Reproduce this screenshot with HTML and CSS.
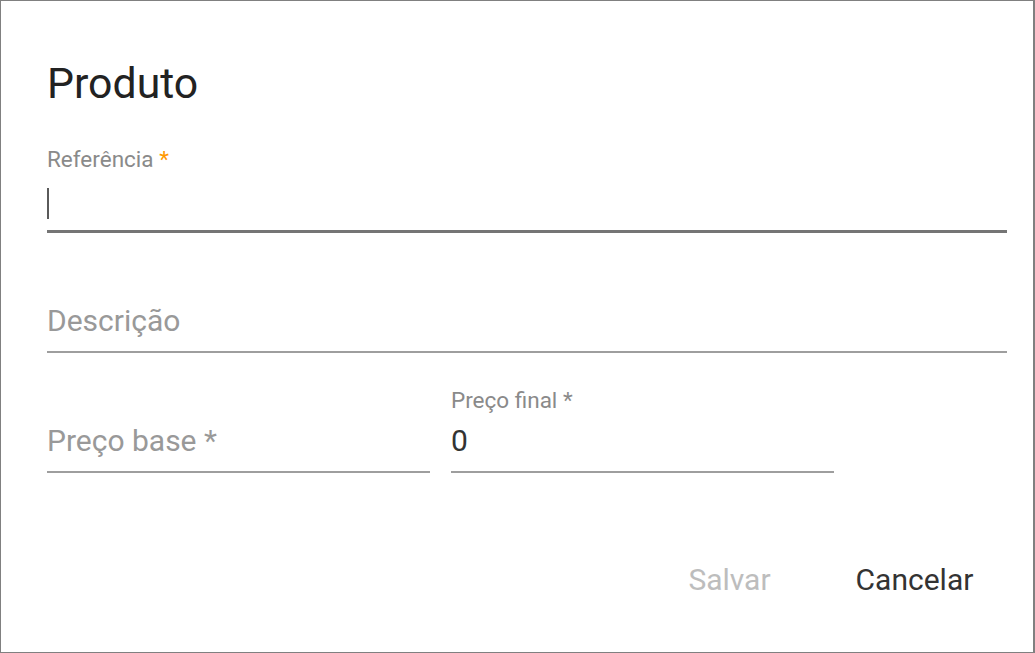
FILE: index.html
```html
<!DOCTYPE html>
<html lang="pt">
<head>
<meta charset="utf-8">
<title>Produto</title>
<link rel="stylesheet" href="styles.css">
</head>
<body>
<div class="frame">
  <h1 class="title">Produto</h1>

  <div class="field field-focused">
    <div class="label">Referência <span class="req">*</span></div>
    <div class="value"><span class="caret"></span></div>
  </div>

  <div class="field">
    <div class="label"></div>
    <div class="value placeholder">Descrição</div>
  </div>

  <div class="row">
    <div class="field half">
      <div class="label"></div>
      <div class="value placeholder">Preço base *</div>
    </div>
    <div class="field half">
      <div class="label">Preço final *</div>
      <div class="value">0</div>
    </div>
  </div>

  <div class="actions">
    <button class="btn btn-disabled" type="button">Salvar</button>
    <button class="btn" type="button">Cancelar</button>
  </div>
</div>
</body>
</html>
```

FILE: styles.css
```css
html, body {
  margin: 0;
  padding: 0;
  background: #ffffff;
}

body {
  font-family: Roboto, "Liberation Sans", Arial, sans-serif;
}

.frame {
  box-sizing: border-box;
  width: 1035px;
  height: 653px;
  border-top: 1px solid #808080;
  border-left: 1px solid #808080;
  border-right: 2px solid #808080;
  border-bottom: 1px solid #808080;
  padding: 58px 26px 0 46px;
  display: flex;
  flex-direction: column;
  overflow: hidden;
}

.title {
  margin: 0 0 39px 0;
  font-size: 42.8px;
  line-height: 48px;
  font-weight: 400;
  color: #222222;
}

.field {
  display: flex;
  flex-direction: column;
  padding-bottom: 12px;
  border-bottom: 2px solid #9e9e9e;
  margin-bottom: 34px;
}

.field-focused {
  border-bottom: 3px solid #757575;
}

.label {
  height: 26px;
  font-size: 22.5px;
  line-height: 26px;
  color: #8a8a8a;
  white-space: nowrap;
}

.req {
  color: #ff9800;
}

.value {
  margin-top: 10px;
  height: 36px;
  font-size: 30px;
  line-height: 36px;
  color: #333333;
  white-space: nowrap;
}

.placeholder {
  color: #999999;
}

.caret {
  display: block;
  width: 2px;
  height: 31px;
  margin-top: 6px;
  background: #5a5a5a;
}

.row {
  display: flex;
  gap: 21px;
}

.half {
  width: 383px;
  margin-bottom: 0;
}

.actions {
  display: flex;
  justify-content: flex-end;
  gap: 20px;
  margin-top: 73px;
  padding-right: 10px;
}

.btn {
  min-width: 165px;
  height: 68px;
  padding: 0 12px;
  border: none;
  background: transparent;
  font-family: Roboto, "Liberation Sans", Arial, sans-serif;
  font-size: 30px;
  line-height: 68px;
  font-weight: 400;
  color: #333333;
  text-align: center;
  cursor: pointer;
}

.btn-disabled {
  color: #bdbdbd;
  cursor: default;
}
```
